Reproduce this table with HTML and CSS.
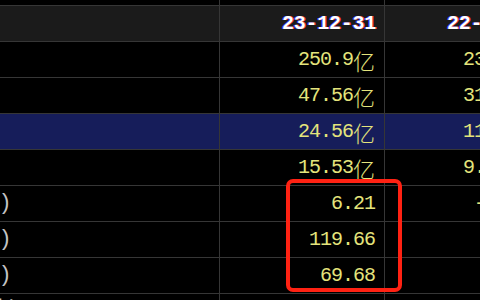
FILE: index.html
```html
<!DOCTYPE html>
<html lang="zh-CN">
<head>
<meta charset="utf-8">
<title>主要指标</title>
<link rel="stylesheet" href="styles.css">
</head>
<body>
<div class="screen">
  <div class="table">
    <div class="row spacer"><div class="cell label"></div><div class="cell"></div><div class="cell"></div></div>
    <div class="row head"><div class="cell label">主要指标</div><div class="cell date">23-12-31</div><div class="cell date">22-12-31</div></div>
    <div class="row"><div class="cell label">营业总收入</div><div class="cell num">250.9<span class="unit">亿</span></div><div class="cell num">236.2<span class="unit">亿</span></div></div>
    <div class="row"><div class="cell label">毛利润</div><div class="cell num">47.56<span class="unit">亿</span></div><div class="cell num">31.86<span class="unit">亿</span></div></div>
    <div class="row sel"><div class="cell label">归属净利润</div><div class="cell num">24.56<span class="unit">亿</span></div><div class="cell num">11.18<span class="unit">亿</span></div></div>
    <div class="row"><div class="cell label">扣非净利润</div><div class="cell num">15.53<span class="unit">亿</span></div><div class="cell num">9.153<span class="unit">亿</span></div></div>
    <div class="row"><div class="cell label">营业总收入同比增长(%)</div><div class="cell num">6.21</div><div class="cell num">-11.23</div></div>
    <div class="row"><div class="cell label">归属净利润同比增长(%)</div><div class="cell num">119.66</div><div class="cell num">-4.56</div></div>
    <div class="row"><div class="cell label">扣非净利润同比增长(%)</div><div class="cell num">69.68</div><div class="cell num">-8.12</div></div>
    <div class="row"><div class="cell label">营业总收入滚动环比增长(%)</div><div class="cell num">1.85</div><div class="cell num">-2.37</div></div>
  </div>
  <div class="highlight"></div>
</div>
</body>
</html>
```

FILE: styles.css
```css
html, body {
  margin: 0;
  padding: 0;
  background: #000;
}

.screen {
  position: relative;
  width: 480px;
  height: 300px;
  overflow: hidden;
  background: #000;
}

.table {
  margin-left: -232px;
  width: max-content;
}

.row {
  display: grid;
  grid-template-columns: 452px 165px 165px;
  height: 36px;
  box-sizing: border-box;
  border-bottom: 1px solid #363636;
}

.row.spacer {
  height: 6px;
}

.row.head {
  background: #1b1b1b;
}

.row.sel {
  background: #161d5a;
}

.cell {
  box-sizing: border-box;
  border-right: 1px solid #363636;
  display: flex;
  align-items: center;
  justify-content: flex-end;
  padding-right: 9px;
  overflow: hidden;
  white-space: nowrap;
  line-height: 22px;
}

.label {
  justify-content: flex-start;
  padding-left: 6px;
  padding-right: 0;
  color: #c4c4c4;
  font-family: "Liberation Mono", "Noto Sans CJK SC", monospace;
  font-size: 22px;
}

.num {
  color: #e4e47c;
  font-family: "Liberation Mono", "Noto Sans CJK SC", monospace;
  font-size: 20px;
  letter-spacing: -1px;
}

.unit {
  font-family: "Noto Sans CJK SC", sans-serif;
  font-size: 22px;
  font-weight: 300;
  letter-spacing: 0;
  vertical-align: 2px;
}

.date {
  color: #ffffff;
  font-family: "Liberation Mono", monospace;
  font-weight: bold;
  font-size: 20px;
  letter-spacing: -0.25px;
  padding-right: 8px;
  text-shadow: -1px 0 #3c3cff, 1px 0 #ff3c3c;
}

.highlight {
  position: absolute;
  left: 286px;
  top: 179px;
  width: 116px;
  height: 113px;
  box-sizing: border-box;
  border: 4px solid #ff2213;
  border-radius: 7px;
}
```
